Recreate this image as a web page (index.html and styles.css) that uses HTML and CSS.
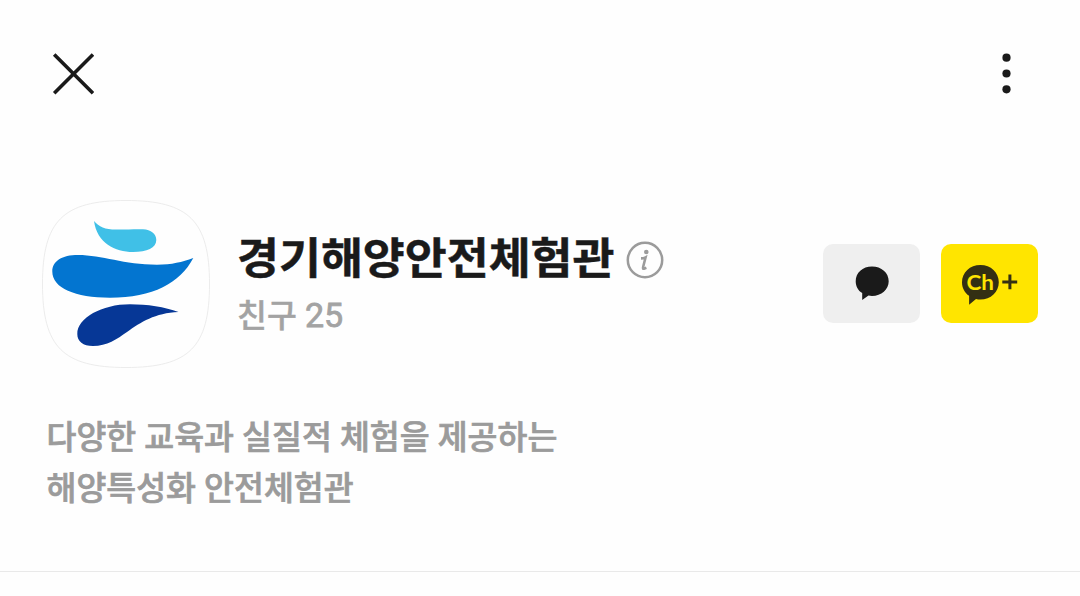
FILE: index.html
```html
<!DOCTYPE html>
<html lang="ko">
<head>
<meta charset="utf-8">
<title>경기해양안전체험관</title>
<link rel="stylesheet" href="styles.css">
</head>
<body>
<header class="topbar">
  <button class="icon-button" aria-label="닫기">
    <svg width="42" height="42" viewBox="0 0 42 42"><path d="M2.200 1.400 41 40.200M41 1.400 2.200 40.200" fill="none" stroke="#1a1a1a" stroke-width="3.600"/></svg>
  </button>
  <button class="icon-button" aria-label="더보기">
    <svg width="10" height="42" viewBox="0 0 10 42"><g fill="#1a1a1a"><circle cx="5.500" cy="4.700" r="4.100"/><circle cx="5.500" cy="20.500" r="4.100"/><circle cx="5.500" cy="36.300" r="4.100"/></g></svg>
  </button>
</header>
<main>
  <section class="profile">
    <svg class="avatar" width="168" height="168" viewBox="0 0 168 168">
      <path d="M84 .5C147 .5 167.500 21 167.500 84S147 167.500 84 167.500 .5 147 .5 84 21 .5 84 .5Z" fill="#fefefe" stroke="#ececec"/>
      <path d="M52 21C57 27 63 29.500 74 29.600C84 29.700 93 29 101 29.300C109 29.700 114.300 34 114.300 40C114.300 48 105 52 91 52C73 52 55 43 52 21Z" fill="#40c0e7"/>
      <path d="M151.300 58C138 83 111 97.700 68 97.700C33 97.700 10.300 88 10.300 71.500C10.300 61 20 55 36 55C60 55 82 64.700 115 64.700C130 64.700 140 62 151.300 58Z" fill="#0375d0"/>
      <path d="M136.500 112C123 107 105 104.300 88 104.300C60 104.300 35.300 118 35.300 134C35.300 141.500 41 146 51 146C65 146 75 139 85 132C99 122 113 113 136.500 112Z" fill="#063796"/>
    </svg>
    <div class="identity">
      <div class="title-row">
        <h1>경기해양안전체험관</h1>
        <svg class="info" width="38" height="38" viewBox="0 0 38 38"><circle cx="19" cy="19" r="17.200" fill="none" stroke="#9b9b9b" stroke-width="2.500"/><circle cx="20.300" cy="11" r="2.300" fill="#9b9b9b"/><path d="M15 17.400C16.800 17.400 18.200 17 19.600 16.300L17.200 25.800Q16.600 28 18 27.700L20.400 26.800" fill="none" stroke="#9b9b9b" stroke-width="2.600"/></svg>
      </div>
      <p class="friends">친구 <span class="count">25</span></p>
    </div>
    <div class="actions">
      <button class="action chat" aria-label="채팅">
        <svg width="97" height="79" viewBox="0 0 97 79"><path d="M49 22.500C58.400 22.500 65.700 28.800 65.700 37.200S58.400 51.900 49 51.900Q47.100 51.900 45.500 51.600L39.200 56V49.100C35 46.500 32.700 42.200 32.700 37.200C32.700 28.800 39.600 22.500 49 22.500Z" fill="#1a1a1a"/></svg>
      </button>
      <button class="action add" aria-label="채널 추가">
        <svg width="97" height="79" viewBox="0 0 97 79"><path d="M39.400 21C49.800 21 57.800 28.400 57.800 38.200S49.800 55.500 39.400 55.500Q37 55.500 35 55L28.100 60.700V51.800C23.700 48.800 21 44 21 38.200C21 28.400 29 21 39.400 21Z" fill="#332f13"/><path d="M61.300 37.900H76.200M68.900 30.500V45.200" stroke="#332f13" stroke-width="3"/><text class="channel" x="25.400" y="45.500" textLength="27.500" lengthAdjust="spacingAndGlyphs">Ch</text></svg>
      </button>
    </div>
  </section>
  <p class="description">다양한 교육과 실질적 체험을 제공하는<br>해양특성화 안전체험관</p>
</main>
</body>
</html>
```
FILE: styles.css
```css
* { box-sizing: border-box; }
body {
  margin: 0;
  background: #fefefe;
  color: #1a1a1a;
  font-family: "Noto Sans CJK KR", sans-serif;
}
h1, p { margin: 0; }
svg { display: block; flex: none; }
button { padding: 0; border: 0; background: none; }
.topbar {
  display: flex;
  justify-content: space-between;
  align-items: center;
  height: 147px;
  padding: 0 69px 0 52px;
}
main { height: 425px; border-bottom: 1px solid #e9e9e9; }
.profile { display: flex; padding: 53px 42px 0; }
.identity { flex: 1; padding: 24px 0 0 27px; }
.title-row { display: flex; align-items: center; gap: 11px; height: 62px; }
h1 {
  font-size: 45.6px;
  font-weight: 700;
  line-height: 62px;
  white-space: nowrap;
  transform: scaleY(.95);
  -webkit-text-stroke: .5px currentColor;
}
.info { margin-top: 9px; }
.friends {
  color: #a3a3a3;
  font-size: 32.5px;
  font-weight: 500;
  line-height: 52px;
  padding-top: 1px;
  word-spacing: -1px;
  transform: scaleY(.97);
  -webkit-text-stroke: .4px currentColor;
}
.count { font-family: Roboto, sans-serif; font-size: 34px; font-weight: 400; -webkit-text-stroke: .8px currentColor; }
.actions { display: flex; gap: 21px; padding-top: 44px; }
.action { width: 97px; height: 79px; border-radius: 10px; }
.chat { background: #efefef; }
.add { background: #ffe500; }
.channel { fill: #ffe500; font: 700 20px Lato, sans-serif; }
.description {
  padding: 41px 46px 0 46.5px;
  color: #9b9b9b;
  font-size: 32.5px;
  font-weight: 500;
  line-height: 51px;
  word-spacing: -1px;
  -webkit-text-stroke: .7px currentColor;
}
```
